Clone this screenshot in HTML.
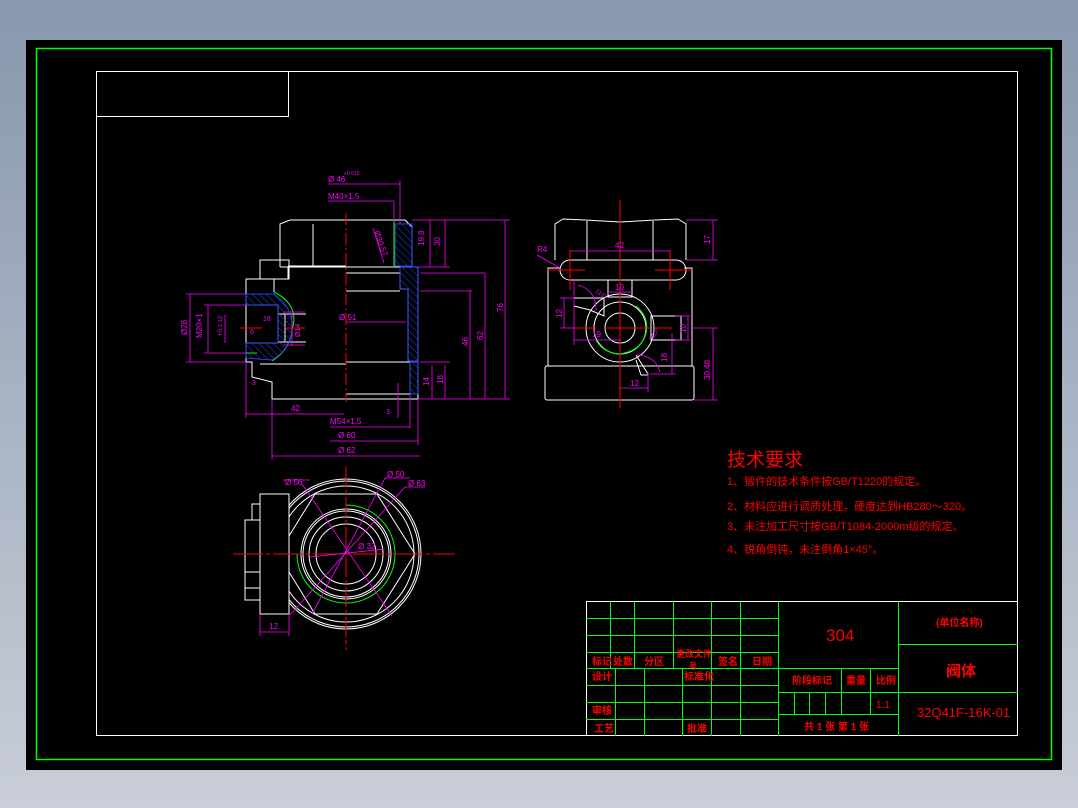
<!DOCTYPE html>
<html><head><meta charset="utf-8"><style>
html,body{margin:0;padding:0;}
body{width:1078px;height:808px;background:linear-gradient(#8797ad,#c9ced8);overflow:hidden;font-family:"Liberation Sans","Noto Sans CJK SC",sans-serif;}
svg{position:absolute;left:0;top:0}
text{font-family:"Liberation Sans","Noto Sans CJK SC",sans-serif;}
</style></head><body>
<svg width="1078" height="808" viewBox="0 0 1078 808">
<rect x="26" y="40" width="1036" height="730" fill="#000"/>
<rect x="36.5" y="48.5" width="1015" height="711" fill="none" stroke="#00ff00" stroke-width="1.5"/>
<rect x="96.5" y="71.5" width="921" height="664" fill="none" stroke="#fff"/>
<polyline points="96.5,116.5 288.5,116.5 288.5,71.5" fill="none" stroke="#fff"/>

<!-- FRONT VIEW -->
<g fill="none" stroke="#fff" stroke-width="1">
<polyline points="280,267 280,224 290,220 346,220"/>
<polyline points="346,220 405,220 412,227 412,267"/>
<line x1="313" y1="224" x2="313" y2="267"/>
<line x1="280" y1="267" x2="418" y2="267"/>
<line x1="288" y1="266" x2="346" y2="266"/>
<rect x="260" y="260" width="29" height="19"/>
<polyline points="246,362 246,279 274,279 274,292"/>
<polyline points="288,279 288,267"/>
<polyline points="346,273 400,273 400,289 408,289 408,362 418,362 418,267"/>
<polyline points="346,291 400,291"/>
<polyline points="346,362 408,362"/>
<polyline points="246,362 252,362 252,377 272,382 272,399 418,399 418,362"/>
<line x1="346" y1="394" x2="412" y2="394"/>
<line x1="260" y1="364" x2="346" y2="364"/>
<rect x="246" y="305" width="32" height="38"/>
<line x1="278" y1="314" x2="306" y2="314"/>
<line x1="278" y1="342" x2="306" y2="342"/>
<polyline points="306,314 285,314 285,342"/>
</g>
<g stroke="#00ff00" fill="none">
<path d="M274,292 Q300,305 292,330 Q290,350 272,361"/>
<line x1="394" y1="221" x2="394" y2="266"/>
<line x1="410" y1="362" x2="410" y2="395"/>
<line x1="246" y1="305" x2="257" y2="305"/>
<line x1="246" y1="353" x2="257" y2="353"/>
</g>
<defs><pattern id="h" width="5" height="5" patternUnits="userSpaceOnUse" patternTransform="rotate(-45)"><line x1="0" y1="0" x2="0" y2="5" stroke="#2a4cff" stroke-width="1"/></pattern></defs>
<g stroke="#2a4cff" stroke-width="1" opacity="0.9">
<path d="M395,224 L412,224 L412,266 L395,266Z M400,267 L418,267 L418,361 L408,361 L408,289 L400,289Z M410,362 L418,362 L418,394 L410,394Z" fill="url(#h)"/>
<path d="M246,294 L274,294 Q295,310 292,330 Q290,350 272,360 L246,358 L246,343 L278,343 L278,305 L246,305Z" fill="url(#h)"/>
</g>
<line x1="346" y1="213" x2="346" y2="402" stroke="#ff0000" stroke-dasharray="12,3,2,3"/>
<line x1="240" y1="328" x2="262" y2="328" stroke="#ff0000"/>
<line x1="285" y1="328" x2="305" y2="328" stroke="#ff0000"/>
<g stroke="#ff00ff" fill="none" stroke-width="0.8">
<line x1="328" y1="184" x2="400" y2="184"/><line x1="400" y1="180" x2="400" y2="224"/>
<line x1="328" y1="201" x2="394" y2="201"/><line x1="394" y1="201" x2="394" y2="221"/>
<line x1="412" y1="220" x2="510" y2="220"/><line x1="418" y1="267" x2="450" y2="267"/>
<line x1="420" y1="273" x2="485" y2="273"/><line x1="420" y1="291" x2="472" y2="291"/>
<line x1="420" y1="362" x2="450" y2="362"/><line x1="418" y1="399" x2="510" y2="399"/>
<line x1="430" y1="220" x2="430" y2="267"/><line x1="445" y1="220" x2="445" y2="267"/>
<line x1="485" y1="273" x2="485" y2="399"/><line x1="470" y1="291" x2="470" y2="399"/>
<line x1="505" y1="220" x2="505" y2="399"/><line x1="445" y1="365" x2="445" y2="399"/><line x1="432" y1="365" x2="432" y2="399"/>
<line x1="186" y1="294" x2="246" y2="294"/><line x1="186" y1="362" x2="246" y2="362"/><line x1="190" y1="294" x2="190" y2="362"/>
<line x1="204" y1="305" x2="246" y2="305"/><line x1="204" y1="353" x2="246" y2="353"/><line x1="208" y1="305" x2="208" y2="353"/>
<line x1="225" y1="315" x2="225" y2="343"/><line x1="292" y1="313" x2="292" y2="346"/><line x1="283" y1="312" x2="305" y2="312"/><line x1="283" y1="345" x2="305" y2="345"/>
<line x1="346" y1="322" x2="406" y2="322"/>
<line x1="246" y1="362" x2="246" y2="418"/><line x1="246" y1="414" x2="344" y2="414"/>
<line x1="272" y1="399" x2="272" y2="460"/><line x1="272" y1="456" x2="420" y2="456"/>
<line x1="330" y1="427" x2="410" y2="427"/><line x1="410" y1="395" x2="410" y2="428"/>
<line x1="330" y1="441" x2="418" y2="441"/><line x1="418" y1="399" x2="418" y2="445"/>
<line x1="398" y1="383" x2="398" y2="418"/>
<line x1="373" y1="228" x2="384" y2="263"/>
</g>
<g fill="#ff00ff" font-size="8">
<text x="328" y="182">Ø 46</text><text x="344" y="175" font-size="5">+0.010</text>
<text x="328" y="199">M40×1.5</text>
<text x="374" y="232" transform="rotate(70 374 232)">Ø30.57</text>
<text x="424" y="246" transform="rotate(-90 424 246)">19.8</text>
<text x="440" y="246" transform="rotate(-90 440 246)">30</text>
<text x="468" y="346" transform="rotate(-90 468 346)">46</text>
<text x="483" y="340" transform="rotate(-90 483 340)">62</text>
<text x="503" y="312" transform="rotate(-90 503 312)">76</text>
<text x="429" y="386" transform="rotate(-90 429 386)">14</text>
<text x="443" y="384" transform="rotate(-90 443 384)">18</text>
<text x="187" y="335" transform="rotate(-90 187 335)">Ø28</text>
<text x="202" y="338" transform="rotate(-90 202 338)">M20×1</text>
<text x="222" y="336" transform="rotate(-90 222 336)" font-size="6">+0.1 12</text>
<text x="263" y="321" font-size="7">16</text><text x="250" y="334" font-size="7">6</text>
<text x="300" y="337" transform="rotate(-90 300 337)" font-size="7">Ø14</text>
<text x="339" y="320">Ø 51</text>
<text x="291" y="411">42</text><text x="252" y="385" font-size="7">3</text>
<text x="386" y="414" font-size="7">3</text>
<text x="330" y="424">M54×1.5</text>
<text x="338" y="438">Ø 60</text>
<text x="338" y="453">Ø 62</text>
</g>

<!-- SIDE VIEW -->
<g fill="none" stroke="#fff">
<polyline points="555,260 555,224 563,219 585,220 620,222 655,220 678,219 686,224 686,260"/>
<line x1="587" y1="221" x2="587" y2="260"/><line x1="653" y1="221" x2="653" y2="260"/>
<polyline points="548,366 548,268 560,268"/><polyline points="692,366 692,268 684,268"/>
<rect x="560" y="260" width="126" height="20" rx="10"/>
<rect x="545" y="366" width="149" height="34" rx="2"/>
<rect x="608" y="280" width="24" height="17"/>
<rect x="651" y="316" width="30" height="24"/>
<polyline points="574,298 604,298 604,316 590,310 574,306"/>
<polyline points="636,355 648,374 648,375 641,375 636,360"/>
<circle cx="620" cy="328" r="34"/><circle cx="620" cy="328" r="26"/><circle cx="620" cy="328" r="15"/>
</g>
<path d="M636,306 A26,26 0 0 1 628,352 A26,26 0 0 1 596,340" fill="none" stroke="#00ff00"/>
<g stroke="#ff0000">
<line x1="620" y1="200" x2="620" y2="408"/>
<line x1="547" y1="270" x2="585" y2="270"/><line x1="655" y1="270" x2="692" y2="270"/>
<line x1="570" y1="250" x2="570" y2="290"/><line x1="670" y1="250" x2="670" y2="290"/>
<line x1="570" y1="328" x2="596" y2="328"/><line x1="605" y1="328" x2="650" y2="328"/><line x1="655" y1="328" x2="672" y2="328"/>
</g>
<g stroke="#ff00ff" fill="none" stroke-width="0.8">
<line x1="570" y1="251" x2="670" y2="251"/>
<line x1="686" y1="220" x2="718" y2="220"/><line x1="686" y1="260" x2="718" y2="260"/><line x1="713" y1="220" x2="713" y2="260"/>
<line x1="692" y1="328" x2="718" y2="328"/><line x1="694" y1="400" x2="718" y2="400"/><line x1="713" y1="328" x2="713" y2="400"/>
<line x1="608" y1="292" x2="632" y2="292"/>
<line x1="560" y1="298" x2="574" y2="298"/><line x1="560" y1="328" x2="574" y2="328"/><line x1="564" y1="298" x2="564" y2="328"/>
<line x1="574" y1="340" x2="620" y2="340"/><line x1="574" y1="280" x2="574" y2="345"/>
<line x1="675" y1="316" x2="690" y2="316"/><line x1="675" y1="340" x2="690" y2="340"/><line x1="688" y1="316" x2="688" y2="340"/>
<line x1="620" y1="388" x2="648" y2="388"/><line x1="648" y1="372" x2="648" y2="392"/>
<line x1="672" y1="333" x2="672" y2="374"/><line x1="650" y1="374" x2="676" y2="374"/>
<line x1="537" y1="255" x2="560" y2="268"/>
<path d="M578,285 Q596,290 596,310"/><path d="M636,355 Q655,355 660,372"/>
</g>
<g fill="#ff00ff" font-size="8">
<text x="537" y="252">R4</text><text x="615" y="248">42</text>
<text x="710" y="244" transform="rotate(-90 710 244)">17</text>
<text x="615" y="290">10</text>
<text x="562" y="318" transform="rotate(-90 562 318)">12</text>
<text x="592" y="337">19</text>
<text x="595" y="292" font-size="6" transform="rotate(35 595 292)">110°</text>
<text x="652" y="340" font-size="6" transform="rotate(-50 652 340)">110°</text>
<text x="686" y="333" transform="rotate(-90 686 333)">10</text>
<text x="667" y="362" transform="rotate(-90 667 362)">18</text>
<text x="630" y="386">12</text>
<text x="710" y="380" transform="rotate(-90 710 380)">30.48</text>
</g>

<!-- BOTTOM VIEW -->
<g fill="none" stroke="#fff">
<circle cx="346" cy="554" r="75"/><circle cx="346" cy="554" r="73"/><circle cx="346" cy="554" r="68"/>
<circle cx="346" cy="554" r="45"/><circle cx="346" cy="554" r="43"/><circle cx="346" cy="554" r="37"/><circle cx="346" cy="554" r="30"/>
<polygon points="315,494 377,494 415,554 377,614 315,614 289,572 289,536"/>
</g>
<path d="M346,505 A49,49 0 1 1 297,554" fill="none" stroke="#00ff00"/>
<g fill="#000" stroke="#fff">
<rect x="260" y="494" width="29" height="120"/>
<rect x="245" y="520" width="15" height="80"/>
<rect x="252" y="504" width="8" height="16"/>
<line x1="245" y1="572" x2="260" y2="572"/><line x1="245" y1="588" x2="260" y2="588"/>
</g>
<g stroke="#ff0000">
<line x1="233" y1="554" x2="455" y2="554" stroke-dasharray="30,3,4,3"/>
<line x1="346" y1="467" x2="346" y2="650" stroke-dasharray="20,3,4,3"/>
</g>
<g stroke="#ff00ff" stroke-width="0.8" fill="none">
<line x1="283" y1="480" x2="310" y2="480"/><line x1="302" y1="484" x2="392" y2="616"/>
<line x1="385" y1="478" x2="410" y2="478"/><line x1="385" y1="478" x2="312" y2="614"/>
<line x1="405" y1="487" x2="425" y2="487"/><line x1="405" y1="487" x2="290" y2="615"/>
<line x1="310" y1="557" x2="385" y2="549"/>
<line x1="260" y1="614" x2="260" y2="636"/><line x1="289" y1="614" x2="289" y2="636"/><line x1="260" y1="632" x2="289" y2="632"/>
</g>
<g fill="#ff00ff" font-size="8">
<text x="285" y="485">Ø 56</text><text x="387" y="477">Ø 50</text><text x="408" y="486">Ø 63</text>
<text x="358" y="549">Ø 32</text><text x="269" y="629">12</text>
</g>

<!-- TECH REQUIREMENTS -->
<g fill="#ff0000">
<text x="727" y="466" font-size="19">技术要求</text>
<text x="727" y="485" font-size="11">1、锻件的技术条件按GB/T1220的规定。</text>
<text x="727" y="510" font-size="11">2、材料应进行调质处理，硬度达到HB280～320。</text>
<text x="727" y="530" font-size="11">3、未注加工尺寸按GB/T1084-2000m级的规定。</text>
<text x="727" y="553" font-size="11">4、锐角倒钝，未注倒角1×45°。</text>
</g>

<!-- TITLE BLOCK -->
<line x1="586" y1="601.5" x2="1018" y2="601.5" stroke="#fff"/>
<line x1="586.5" y1="601" x2="586.5" y2="736" stroke="#fff"/>
<g stroke="#00ff00" stroke-width="1">
<line x1="586" y1="618.5" x2="778" y2="618.5"/><line x1="586" y1="635.5" x2="778" y2="635.5"/>
<line x1="586" y1="652.5" x2="778" y2="652.5"/><line x1="586" y1="668.5" x2="898" y2="668.5" />
<line x1="586" y1="685.5" x2="778" y2="685.5"/><line x1="586" y1="702.5" x2="778" y2="702.5"/>
<line x1="586" y1="719.5" x2="778" y2="719.5"/>
<line x1="610.5" y1="601" x2="610.5" y2="668"/><line x1="634.5" y1="601" x2="634.5" y2="668"/>
<line x1="673.5" y1="601" x2="673.5" y2="668"/><line x1="711.5" y1="601" x2="711.5" y2="736"/>
<line x1="740.5" y1="601" x2="740.5" y2="736"/><line x1="778.5" y1="601" x2="778.5" y2="736"/>
<line x1="615.5" y1="668" x2="615.5" y2="736"/><line x1="644.5" y1="668" x2="644.5" y2="736"/>
<line x1="682.5" y1="668" x2="682.5" y2="736"/>
<line x1="898.5" y1="601" x2="898.5" y2="736"/>
<line x1="778" y1="692.5" x2="1018" y2="692.5"/><line x1="778" y1="714.5" x2="898" y2="714.5"/>
<line x1="898" y1="644.5" x2="1018" y2="644.5"/>
<line x1="841.5" y1="668" x2="841.5" y2="714"/><line x1="870.5" y1="668" x2="870.5" y2="714"/>
<line x1="794.5" y1="692" x2="794.5" y2="714"/><line x1="809.5" y1="692" x2="809.5" y2="714"/><line x1="825.5" y1="692" x2="825.5" y2="714"/>
</g>
<g fill="#ff0000" font-size="10" font-weight="bold">
<text x="592" y="665">标记</text><text x="613" y="665">处数</text><text x="644" y="665">分区</text>
<text x="676" y="657" font-size="9">更改文件</text><text x="689" y="669" font-size="8">号</text>
<text x="718" y="665">签名</text><text x="752" y="665">日期</text>
<text x="592" y="680">设计</text><text x="684" y="680">标准化</text>
<text x="592" y="714">审核</text><text x="594" y="732">工艺</text><text x="687" y="732">批准</text>
<text x="792" y="684">阶段标记</text><text x="846" y="684">重量</text><text x="876" y="684">比例</text>
<text x="876" y="708" font-weight="normal">1:1</text>
<text x="804" y="730">共 1 张  第 1 张</text>
<text x="936" y="626">(单位名称)</text>
<text x="946" y="676" font-size="15">阀体</text>
<text x="917" y="717" font-size="13" font-weight="normal">32Q41F-16K-01</text>
</g>
<text x="826" y="641" fill="#ff0000" font-size="17">304</text>
</svg>
</body></html>
